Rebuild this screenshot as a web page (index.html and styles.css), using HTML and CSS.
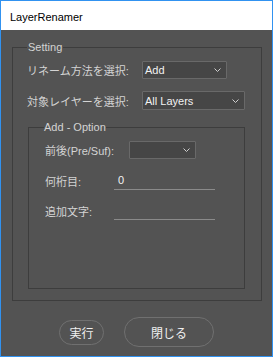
FILE: index.html
```html
<!DOCTYPE html>
<html lang="ja">
<head>
    <meta charset="UTF-8">
    <title>LayerRenamer</title>
    <link rel="stylesheet" href="styles.css">
</head>
<body>
<div class="window">
    <div class="titlebar">LayerRenamer</div>
    <div class="dialog">
        <fieldset class="panel panel-setting">
            <legend>Setting</legend>
            <div class="row row-method">
                <label class="label label-wide">リネーム方法を選択:</label>
                <div class="select select-method">
                    <span>Add</span>
                    <svg class="chevron" width="7" height="4" viewBox="0 0 7 4"><polyline points="0.5,0.5 3.5,3.5 6.5,0.5" fill="none" stroke="#cfcfcf" stroke-width="1"/></svg>
                </div>
            </div>
            <div class="row row-target">
                <label class="label label-wide">対象レイヤーを選択:</label>
                <div class="select select-target">
                    <span>All Layers</span>
                    <svg class="chevron" width="7" height="4" viewBox="0 0 7 4"><polyline points="0.5,0.5 3.5,3.5 6.5,0.5" fill="none" stroke="#cfcfcf" stroke-width="1"/></svg>
                </div>
            </div>
            <fieldset class="panel panel-option">
                <legend>Add - Option</legend>
                <div class="row row-pos">
                    <label class="label label-pos">前後(Pre/Suf):</label>
                    <div class="select select-pos">
                        <span></span>
                        <svg class="chevron" width="7" height="4" viewBox="0 0 7 4"><polyline points="0.5,0.5 3.5,3.5 6.5,0.5" fill="none" stroke="#cfcfcf" stroke-width="1"/></svg>
                    </div>
                </div>
                <div class="row row-digit">
                    <label class="label label-short">何桁目:</label>
                    <div class="field">0</div>
                </div>
                <div class="row row-text">
                    <label class="label label-short">追加文字:</label>
                    <div class="field"></div>
                </div>
            </fieldset>
        </fieldset>
        <div class="buttons">
            <button class="btn btn-run">実行</button>
            <button class="btn btn-close">閉じる</button>
        </div>
    </div>
</div>
</body>
</html>
```

FILE: styles.css
```css
/* LayerRenamer dialog */
body {
    margin: 0;
    background: #FFFFFF;
}

.window {
    box-sizing: border-box;
    width: 273px;
    height: 357px;
    border: 1px solid #3192F0;
    display: flex;
    flex-direction: column;
    font-family: "Liberation Sans", "Noto Sans CJK JP", sans-serif;
    font-size: 11px;
}

.titlebar {
    height: 29px;
    padding: 2px 0 0 9px;
    box-sizing: border-box;
    display: flex;
    align-items: center;
    background: #FFFFFF;
    color: #000000;
}

.dialog {
    flex: 1;
    background: #535353;
    padding: 11px 0 0 11px;
}

.panel {
    margin: 0;
    border: 1px solid #3D3D3D;
    box-sizing: border-box;
}

.panel legend {
    padding: 0 1px;
    line-height: 13px;
    color: #D4D4D4;
}

.panel-setting {
    width: 250px;
    padding: 7px 15px 11px 14px;
}

.panel-option {
    width: 217px;
    margin: 11px 0 0 1px;
    padding: 7px 0 68px 15px;
}

.panel-option legend {
    padding: 0;
}

.row {
    display: flex;
    align-items: center;
}

.row-method {
    height: 18px;
    margin-bottom: 12px;
}

.row-target {
    height: 19px;
}

.row-pos {
    height: 18px;
    margin-bottom: 12px;
}

.row-digit {
    height: 19px;
    margin-bottom: 11px;
}

.row-text {
    height: 19px;
}

.label {
    color: #D4D4D4;
    white-space: nowrap;
}

.label-wide {
    width: 115px;
}

.label-pos {
    width: 84px;
    padding-left: 1px;
}

.label-short {
    width: 69px;
    padding-left: 1px;
}

.select {
    box-sizing: border-box;
    height: 100%;
    display: flex;
    align-items: center;
    justify-content: space-between;
    padding: 0 5px 0 2px;
    background: #464646;
    border: 1px solid #696969;
    border-radius: 1px;
    color: #F2F2F2;
}

.select-method {
    width: 85px;
}

.select-target {
    width: 103px;
}

.select-pos {
    width: 67px;
}

.field {
    box-sizing: border-box;
    width: 101px;
    height: 100%;
    padding-left: 4px;
    display: flex;
    align-items: center;
    border-bottom: 1px solid #8A8A8A;
    color: #F2F2F2;
}

.buttons {
    display: flex;
    justify-content: center;
    align-items: center;
    gap: 20px;
    padding: 16px 11px 0 0;
}

.btn {
    box-sizing: border-box;
    background: none;
    border: 1px solid #707070;
    border-radius: 15px;
    color: #F0F0F0;
    font-family: "Liberation Sans", "Noto Sans CJK JP", sans-serif;
    font-size: 12px;
    padding: 0;
}

.btn-run {
    width: 45px;
    height: 25px;
}

.btn-close {
    width: 90px;
    height: 30px;
}
```
